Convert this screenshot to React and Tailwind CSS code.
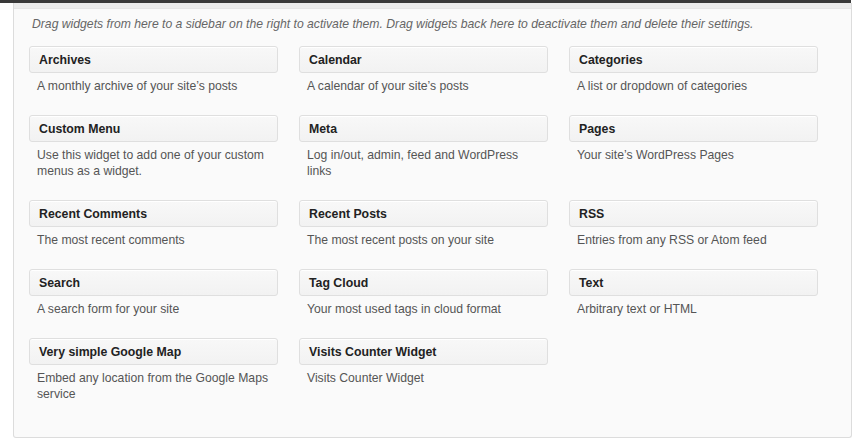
import React from "react";

const widgets = [
  ["Archives", "A monthly archive of your site\u2019s posts"],
  ["Calendar", "A calendar of your site\u2019s posts"],
  ["Categories", "A list or dropdown of categories"],
  ["Custom Menu", "Use this widget to add one of your custom menus as a widget."],
  ["Meta", "Log in/out, admin, feed and WordPress links"],
  ["Pages", "Your site\u2019s WordPress Pages"],
  ["Recent Comments", "The most recent comments"],
  ["Recent Posts", "The most recent posts on your site"],
  ["RSS", "Entries from any RSS or Atom feed"],
  ["Search", "A search form for your site"],
  ["Tag Cloud", "Your most used tags in cloud format"],
  ["Text", "Arbitrary text or HTML"],
  ["Very simple Google Map", "Embed any location from the Google Maps service"],
  ["Visits Counter Widget", "Visits Counter Widget"],
];

export default function App() {
  return (
    <div className="w-[865px] h-[446px] bg-white overflow-hidden font-['Liberation_Sans',Arial,sans-serif]">
      <div className="w-[851px] h-[3px] bg-[#3a3a3a]" />
      <div className="ml-[13px] w-[839px] h-[435px] border-x border-b border-[#dcdcdc] bg-[#fafafa] rounded-b-[3px] flex flex-col">
        <div className="h-[6px] bg-[#ececec] border-b border-[#e6e6e6]" />
        <p className="mt-[7px] pl-[18px] text-[12.2px] leading-4 italic text-[#666]">
          Drag widgets from here to a sidebar on the right to activate them. Drag widgets back here to deactivate them and delete their settings.
        </p>
        <div className="mt-[14px] ml-[15px] grid grid-cols-[249px_249px_249px] gap-x-[21px] gap-y-[21px]">
          {widgets.map(([title, desc]) => (
            <div key={title}>
              <div className="h-[27px] border border-[#dfdfdf] rounded-[3px] bg-gradient-to-b from-[#f8f8f8] to-[#f2f2f2] shadow-[inset_0_1px_0_#fff] flex items-center pl-[9px] pt-px text-[12.3px] font-bold text-[#222]">
                {title}
              </div>
              <div className="mt-[5px] px-[8px] text-[12.2px] leading-4 text-[#555]">{desc}</div>
            </div>
          ))}
        </div>
      </div>
    </div>
  );
}
